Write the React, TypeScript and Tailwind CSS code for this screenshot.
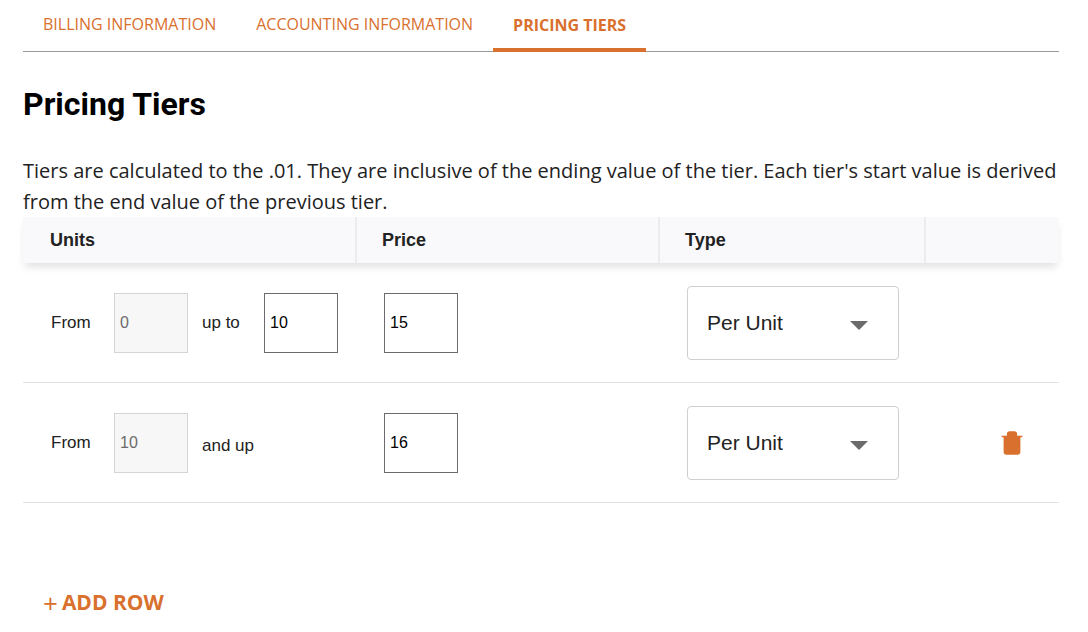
import { Trash } from 'lucide-react';

const tabs = ['BILLING INFORMATION', 'ACCOUNTING INFORMATION', 'PRICING TIERS'];

function Box({ value, disabled }: { value: string; disabled?: boolean }) {
  return (
    <div
      className={
        'w-[74px] h-[60px] flex items-center px-[5px] text-[16px] border ' +
        (disabled ? 'bg-[#f7f7f7] border-[#d4d4d4] text-[#6b6b6b]' : 'bg-white border-[#6b6b6b] text-black')
      }
    >
      {value}
    </div>
  );
}

function Select() {
  return (
    <div className="w-[212px] h-[74px] rounded border border-[#cfcfcf] flex items-center justify-between pl-[19px] pr-[30px] text-[21px] text-[#222]">
      <span>Per Unit</span>
      <span className="w-0 h-0 border-l-[9px] border-r-[9px] border-t-[9px] border-l-transparent border-r-transparent border-t-[#6b6b6b] mt-[6px]" />
    </div>
  );
}

function Row({ from, upTo, price, last }: { from: string; upTo?: string; price: string; last?: boolean }) {
  return (
    <div className="flex items-center h-[120px] border-b border-[#e2e2e2] text-[17px] text-[#222]">
      <div className="w-[334px] flex items-center pl-[28px]">
        <span className="w-[63px]">From</span>
        <Box value={from} disabled />
        {upTo ? (
          <>
            <span className="ml-[14px] w-[62px]">up to</span>
            <Box value={upTo} />
          </>
        ) : (
          <span className="ml-[14px] mt-[6px]">and up</span>
        )}
      </div>
      <div className="w-[330px] pl-[27px]">
        <Box value={price} />
      </div>
      <div className="w-[266px]">
        <Select />
      </div>
      <div className="flex-1 flex justify-center pl-[12px]">
        {last && <Trash className="w-[26px] h-[28px] text-[#d9702e] fill-[#d9702e]" strokeWidth={1.5} />}
      </div>
    </div>
  );
}

export default function App() {
  return (
    <div className="w-[1088px] h-[632px] bg-white px-[23px] pr-[29px]" style={{ fontFamily: 'Arial, "Liberation Sans", sans-serif' }}>
      <div className="flex border-b border-[#9a9a9a] h-[52px] items-end" style={{ fontFamily: '"Open Sans", sans-serif' }}>
        {tabs.map((t, i) => (
          <div
            key={t}
            className={
              'h-[52px] flex items-center px-[20px] pt-[2px] text-[16px] text-[#d9702e] border-b-4 ' +
              (i === 2 ? 'font-bold border-[#d9702e] -mb-[1px]' : 'border-transparent')
            }
          >
            {t}
          </div>
        ))}
      </div>
      <h1 className="mt-[36px] text-[32px] font-bold text-black leading-none" style={{ fontFamily: 'Roboto, Arial, sans-serif' }}>
        Pricing Tiers
      </h1>
      <p className="mt-[35px] text-[20px] leading-[31px] text-[#222]" style={{ fontFamily: '"Open Sans", sans-serif' }}>
        Tiers are calculated to the .01. They are inclusive of the ending value of the tier. Each tier's start value is derived from the end value of the previous tier.
      </p>
      <div className="flex h-[46px] bg-[#f9f9fb] shadow-[0_6px_8px_-2px_rgba(0,0,0,0.12)] text-[18px] font-bold text-[#222] relative">
        <div className="w-[334px] pl-[27px] flex items-center border-r-2 border-[#ececef]">Units</div>
        <div className="w-[303px] pl-[25px] flex items-center border-r-2 border-[#ececef]">Price</div>
        <div className="w-[266px] pl-[25px] flex items-center border-r-2 border-[#ececef]">Type</div>
        <div className="flex-1" />
      </div>
      <Row from="0" upTo="10" price="15" />
      <Row from="10" price="16" last />
      <div className="mt-[84px] pl-[20px] flex items-center gap-[4px] text-[21px] font-bold text-[#d9702e]" style={{ fontFamily: '"Open Sans", sans-serif' }}>
        <span className="font-normal text-[26px] leading-none">+</span>ADD ROW
      </div>
    </div>
  );
}
